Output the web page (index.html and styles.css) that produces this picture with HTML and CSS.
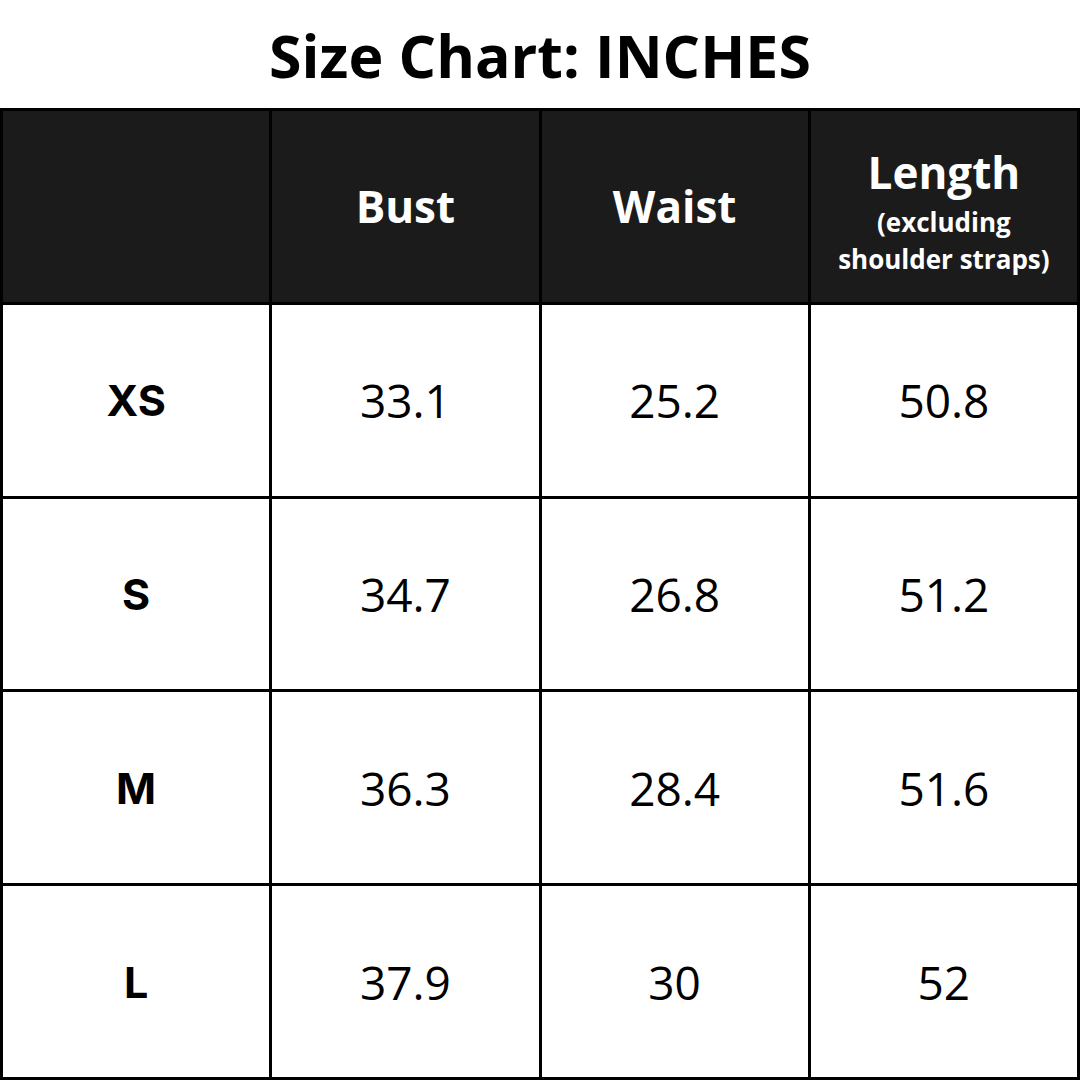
FILE: index.html
```html
<!DOCTYPE html>
<html>
<head>
<meta charset="utf-8">
<link rel="stylesheet" href="styles.css">
</head>
<body>
<div class="page">
  <h1 class="title">Size Chart: INCHES</h1>
  <div class="chart">
    <div class="cell head"></div>
    <div class="cell head"><span class="h">Bust</span></div>
    <div class="cell head"><span class="h">Waist</span></div>
    <div class="cell head"><span class="h">Length</span><span class="sub">(excluding<br>shoulder straps)</span></div>

    <div class="cell size">XS</div>
    <div class="cell num">33.1</div>
    <div class="cell num">25.2</div>
    <div class="cell num">50.8</div>

    <div class="cell size">S</div>
    <div class="cell num">34.7</div>
    <div class="cell num">26.8</div>
    <div class="cell num">51.2</div>

    <div class="cell size">M</div>
    <div class="cell num">36.3</div>
    <div class="cell num">28.4</div>
    <div class="cell num">51.6</div>

    <div class="cell size">L</div>
    <div class="cell num">37.9</div>
    <div class="cell num">30</div>
    <div class="cell num">52</div>
  </div>
</div>
</body>
</html>
```
FILE: styles.css
```css
html, body {
  margin: 0;
  padding: 0;
  background: #fff;
}
.page {
  width: 1080px;
  height: 1080px;
  display: flex;
  flex-direction: column;
}
.title {
  margin: 0;
  height: 108px;
  display: flex;
  align-items: center;
  justify-content: center;
  font-family: "Open Sans", sans-serif;
  font-weight: 700;
  font-size: 59px;
  color: #000;
  letter-spacing: 0;
  padding-top: 2px;
  box-sizing: border-box;
}
.chart {
  flex: 1;
  display: grid;
  grid-template-columns: repeat(4, 1fr);
  grid-template-rows: repeat(5, 1fr);
  gap: 3px;
  padding: 3px;
  background: #000;
}
.cell {
  background: #fff;
  display: flex;
  flex-direction: column;
  align-items: center;
  justify-content: center;
  color: #000;
}
.head {
  background: #1b1b1b;
  color: #fff;
  font-family: "Open Sans", sans-serif;
  font-weight: 700;
}
.h {
  font-size: 44px;
  line-height: 1.2;
}
.sub {
  font-size: 26px;
  line-height: 37px;
  text-align: center;
  margin-top: 5px;
  margin-bottom: -11px;
}
.size {
  font-family: Inter, sans-serif;
  font-weight: 700;
  font-size: 43px;
}
.num {
  font-family: "Open Sans", sans-serif;
  font-weight: 400;
  font-size: 46px;
}
```
